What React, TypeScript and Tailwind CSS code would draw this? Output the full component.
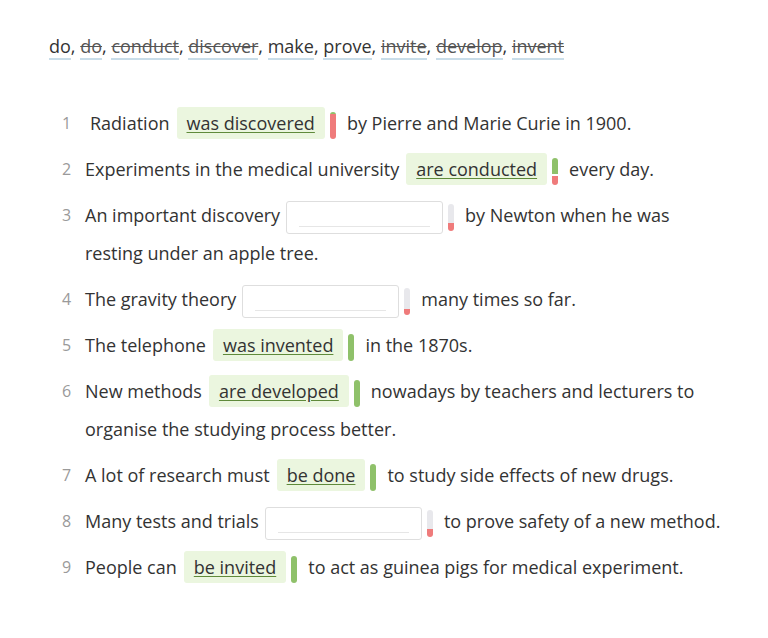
import React from "react";

type Part = string | { answer?: string; empty?: number; bar: [string, number][] };

const bank: { w: string; done: boolean }[] = [
  { w: "do", done: false },
  { w: "do", done: true },
  { w: "conduct", done: true },
  { w: "discover", done: true },
  { w: "make", done: false },
  { w: "prove", done: false },
  { w: "invite", done: true },
  { w: "develop", done: true },
  { w: "invent", done: true },
];

const G = "#8fc16a";
const R = "#ef7b7b";
const E = "#e8e8ec";

const items: Part[][] = [
  [" Radiation", { answer: "was discovered", bar: [[G, 10], [R, 90]] }, "by Pierre and Marie Curie in 1900."],
  ["Experiments in the medical university", { answer: "are conducted", bar: [[G, 62], ["#ffffff", 4], [R, 34]] }, "every day."],
  ["An important discovery", { empty: 157, bar: [[E, 70], [R, 30]] }, "by Newton when he was resting under an apple tree."],
  ["The gravity theory", { empty: 157, bar: [[E, 78], [R, 22]] }, "many times so far."],
  ["The telephone", { answer: "was invented", bar: [[G, 100]] }, "in the 1870s."],
  ["New methods", { answer: "are developed", bar: [[G, 100]] }, "nowadays by teachers and lecturers to organise the studying process better."],
  ["A lot of research must", { answer: "be done", bar: [[G, 100]] }, "to study side effects of new drugs."],
  ["Many tests and trials", { empty: 157, bar: [[E, 70], [R, 30]] }, "to prove safety of a new method."],
  ["People can", { answer: "be invited", bar: [[G, 100]] }, "to act as guinea pigs for medical experiment."],
];

function Bar({ segs }: { segs: [string, number][] }) {
  return (
    <span className="inline-flex flex-col w-[6px] h-[27px] rounded-full overflow-hidden align-middle ml-[5px] mr-[11px]">
      {segs.map(([c, h], i) => (
        <span key={i} style={{ backgroundColor: c, height: `${h}%` }} className="block w-full" />
      ))}
    </span>
  );
}

export default function App() {
  return (
    <div
      className="w-[768px] h-[638px] bg-white text-[#333333] text-[18px]"
      style={{ fontFamily: '"Open Sans", sans-serif' }}
    >
      <div className="pl-[49px] pt-[32px] leading-[28px]">
        {bank.map((b, i) => (
          <React.Fragment key={i}>
            <span
              className={`border-b-2 border-[#c9dde9] ${b.done ? "line-through text-[#555555]" : ""}`}
            >
              {b.w}
            </span>
            {i < bank.length - 1 ? ", " : ""}
          </React.Fragment>
        ))}
      </div>

      <ol className="mt-[44px] pl-[62px] pr-[40px] flex flex-col gap-[8px]">
        {items.map((parts, n) => (
          <li key={n} className="flex leading-[38px]">
            <span className="w-[23px] shrink-0 text-[#9a9a9a] text-[16px]">{n + 1}</span>
            <span className="block">
              {parts.map((p, i) => {
                if (typeof p === "string") {
                  return (
                    <span key={i} className={p.startsWith(" ") ? "pl-[5px]" : ""}>
                      {p.trim()}
                    </span>
                  );
                }
                return (
                  <React.Fragment key={i}>
                    {p.answer ? (
                      <span className="inline-block h-[32px] px-[10px] ml-[7px] rounded-[3px] bg-[#ebf6df] leading-[32px]">
                        <span className="underline decoration-[#5f8a3a] underline-offset-[2px]">{p.answer}</span>
                      </span>
                    ) : (
                      <span
                        className="inline-flex items-end h-[33px] px-[12px] pb-[6px] ml-[6px] rounded-[3px] border border-[#dedede] bg-white align-middle"
                        style={{ width: p.empty }}
                      >
                        <span className="block w-full h-px bg-[#e6e6e6]" />
                      </span>
                    )}
                    <Bar segs={p.bar} />
                  </React.Fragment>
                );
              })}
            </span>
          </li>
        ))}
      </ol>
    </div>
  );
}
